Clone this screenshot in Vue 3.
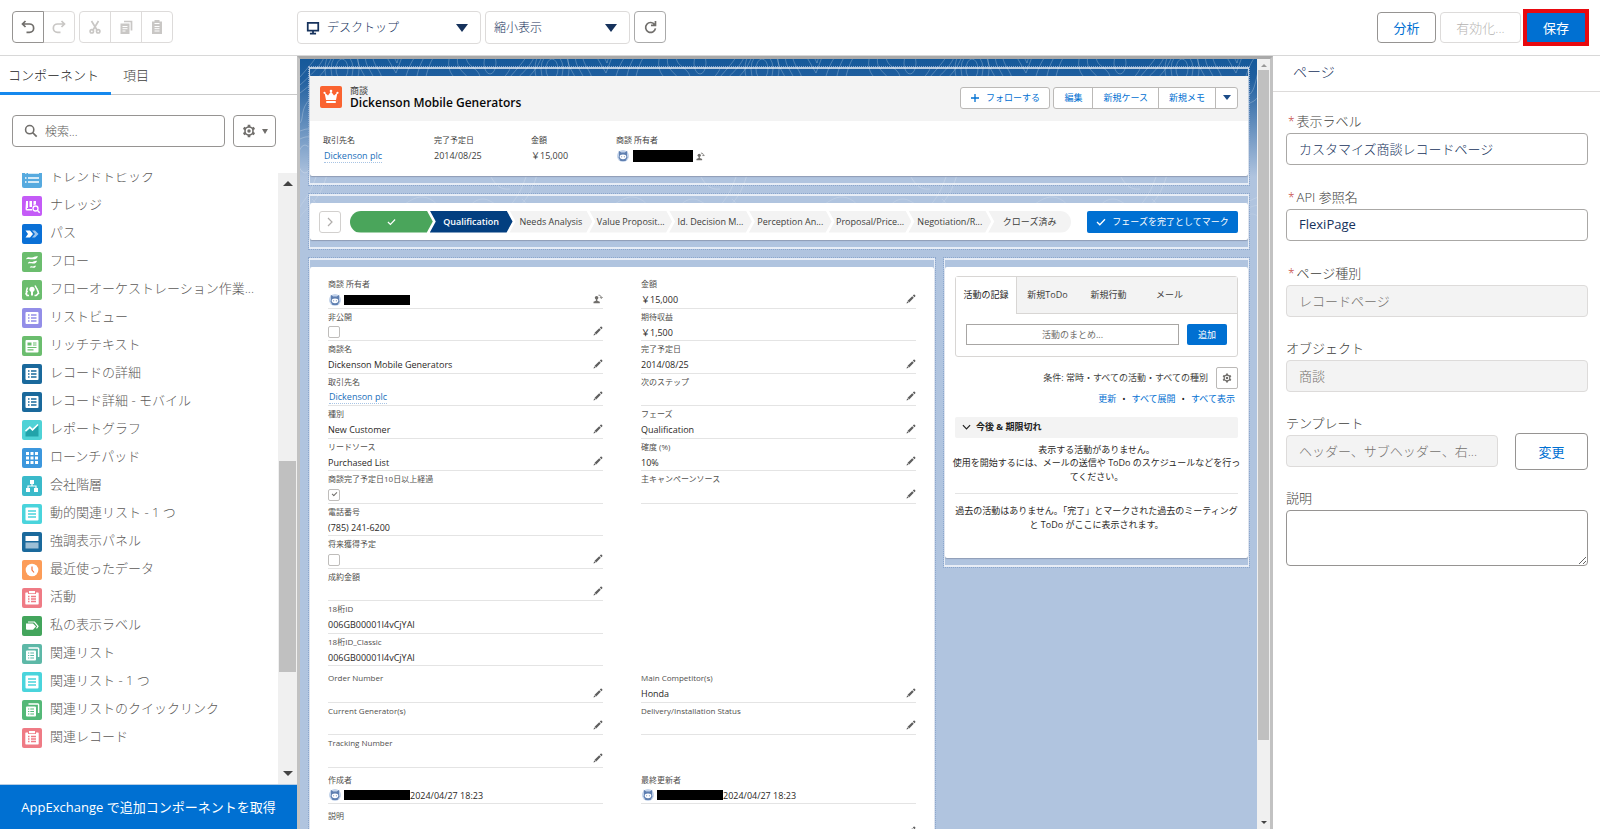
<script setup>
import { ref } from 'vue'

const device = ref('デスクトップ')
const zoom = ref('縮小表示')
const label = ref('カスタマイズ商談レコードページ')
const apiName = ref('FlexiPage')
const description = ref('')

const components = [
  { name: 'トレンドトピック', icon: 'topic', color: '#56aadf' },
  { name: 'ナレッジ', icon: 'knowledge', color: '#c45bf7' },
  { name: 'パス', icon: 'path', color: '#0a70d6' },
  { name: 'フロー', icon: 'flow', color: '#6bbd6e' },
  { name: 'フローオーケストレーション作業...', icon: 'orchestration', color: '#6bbd6e' },
  { name: 'リストビュー', icon: 'list', color: '#938ee8' },
  { name: 'リッチテキスト', icon: 'richtext', color: '#6bbd6e' },
  { name: 'レコードの詳細', icon: 'list', color: '#1a699c' },
  { name: 'レコード詳細 - モバイル', icon: 'list', color: '#1a699c' },
  { name: 'レポートグラフ', icon: 'chart', color: '#4fd2d6' },
  { name: 'ローンチパッド', icon: 'launch', color: '#3c97dd' },
  { name: '会社階層', icon: 'hierarchy', color: '#3bbaca' },
  { name: '動的関連リスト - 1 つ', icon: 'lines', color: '#4ad4dc' },
  { name: '強調表示パネル', icon: 'panel', color: '#1a699c' },
  { name: '最近使ったデータ', icon: 'clock', color: '#fc9c58' },
  { name: '活動', icon: 'clipboard', color: '#ef7b85' },
  { name: '私の表示ラベル', icon: 'tag', color: '#43a55c' },
  { name: '関連リスト', icon: 'stack', color: '#5db8a7' },
  { name: '関連リスト - 1 つ', icon: 'lines', color: '#4ad4dc' },
  { name: '関連リストのクイックリンク', icon: 'stack', color: '#54b877' },
  { name: '関連レコード', icon: 'clipboard', color: '#ef7b85' },
]

const stages = ['Needs Analysis', 'Value Proposit...', 'Id. Decision M...', 'Perception An...', 'Proposal/Price...', 'Negotiation/R...', 'クローズ済み']

const sections = [
  [
    [
      { label: '商談 所有者', type: 'owner', edit: 'owner' },
      { label: '非公開', type: 'check', checked: false, edit: 'pencil' },
      { label: '商談名', value: 'Dickenson Mobile Generators', edit: 'pencil' },
      { label: '取引先名', type: 'link', value: 'Dickenson plc', edit: 'pencil' },
      { label: '種別', value: 'New Customer', edit: 'pencil' },
      { label: 'リードソース', value: 'Purchased List', edit: 'pencil' },
      { label: '商談完了予定日10日以上経過', type: 'check', checked: true },
      { label: '電話番号', value: '(785) 241-6200' },
      { label: '将来獲得予定', type: 'check', checked: false, edit: 'pencil' },
      { label: '成約金額', edit: 'pencil' },
      { label: '18桁ID', value: '006GB00001I4vCjYAI' },
      { label: '18桁ID_Classic', value: '006GB00001I4vCjYAI' },
    ],
    [
      { label: '金額', value: '￥15,000', edit: 'pencil' },
      { label: '期待収益', value: '￥1,500' },
      { label: '完了予定日', value: '2014/08/25', edit: 'pencil' },
      { label: '次のステップ', edit: 'pencil' },
      { label: 'フェーズ', value: 'Qualification', edit: 'pencil' },
      { label: '確度 (%)', value: '10%', edit: 'pencil' },
      { label: '主キャンペーンソース', edit: 'pencil' },
    ],
  ],
  [
    [
      { label: 'Order Number', edit: 'pencil' },
      { label: 'Current Generator(s)', edit: 'pencil' },
      { label: 'Tracking Number', edit: 'pencil' },
    ],
    [
      { label: 'Main Competitor(s)', value: 'Honda', edit: 'pencil' },
      { label: 'Delivery/Installation Status', edit: 'pencil' },
    ],
  ],
  [
    [{ label: '作成者', type: 'owner', value: '2024/04/27 18:23' }],
    [{ label: '最終更新者', type: 'owner', value: '2024/04/27 18:23' }],
  ],
  [[{ label: '説明', edit: 'pencil' }]],
]
</script>

<template>
  <svg class="sprite" aria-hidden="true">
    <symbol id="i-topic" viewBox="0 0 20 20"><path d="M3 5h1.500M6 5h11M3 10h1.500M6 10h11M3 14h1.500M6 14h11" stroke="#fff" stroke-width="1.500" /></symbol>
    <symbol id="i-knowledge" viewBox="0 0 20 20"><path d="M4 5h2v7H5v1h5v1.500H5A1.500 1.500 0 0 1 3.500 13zM7.500 5H10v6H7.500zM11.500 5H14v3.500a4 4 0 0 0-2.500 1z" fill="#fff" /><circle cx="13.500" cy="12.500" r="2.500" fill="none" stroke="#fff" stroke-width="1.300" /><path d="m15.500 14.500 2.200 2.200" stroke="#fff" stroke-width="1.500" /></symbol>
    <symbol id="i-path" viewBox="0 0 20 20"><path d="M3.500 6.500H8L11 10l-3 3.500H3.500L6 10z" fill="#fff" /><path d="M10 6.500h3L16.500 10 13 13.500h-3L13 10z" fill="#9cc5ee" /></symbol>
    <symbol id="i-flow" viewBox="0 0 20 20"><path d="M4 7.200c1.500-3.400 4-1.300 6-1.700S13 3.800 16 4.300c-1.300 3-3.300 3.200-5.300 3S7 6.600 4 7.200zM5.800 11.500c1.300-2.900 3-1.100 4.700-1.500s2.200-1.400 4.500-1.100c-1 2.500-2.500 2.700-4.200 2.500s-2.800-.5-5 .1zM7.800 15.800c1-2.400 2-1 3.200-1.300s1.500-.9 3-.8c-.8 2-1.800 2.200-2.900 2s-1.800-.4-3.300.1z" fill="#fff" /></symbol>
    <symbol id="i-orchestration" viewBox="0 0 20 20"><circle cx="10" cy="9.300" r="2.600" fill="#fff" /><path d="M9 11h2v4.500H9z" fill="#fff" /><path d="M5.500 7.500c-1 2.500-1.800 5-.5 8h2M5.500 11l-2 3.500M13 5.500l3 5.500c.8 1.500.5 3-2 4.500h-1.500M15 9l1.800 5" fill="none" stroke="#fff" stroke-width="1.500" /></symbol>
    <symbol id="i-list" viewBox="0 0 20 20"><rect x="3.500" y="4" width="13" height="12" rx="1" fill="#fff" /><path d="M6 7h1.500M9 7h5.500M6 10h1.500M9 10h5.500M6 13h1.500M9 13h5.500" stroke="currentColor" stroke-width="1.400" /></symbol>
    <symbol id="i-richtext" viewBox="0 0 20 20"><rect x="3.500" y="4" width="13" height="12.500" rx="1" fill="#fff" /><path d="M5.500 6.500h4v3h-4z" fill="currentColor" /><path d="M11 7h3.500M11 9h3.500M5.500 11.500h9M5.500 13.800h6" stroke="currentColor" stroke-width="1.200" /></symbol>
    <symbol id="i-chart" viewBox="0 0 20 20"><path d="M3.500 12.500 8 8.500l2.500 2.500L16.500 5v11.500h-13z" fill="#22a3aa" /><path d="m3.500 11 4.300-3.800 2.700 2.600 5.500-5.300" fill="none" stroke="#fff" stroke-width="1.600" /></symbol>
    <symbol id="i-launch" viewBox="0 0 20 20"><path d="M4 4h3v3H4zM8.500 4h3v3h-3zM13 4h3v3h-3zM4 8.500h3v3H4zM8.500 8.500h3v3h-3zM13 8.500h3v3h-3zM4 13h3v3H4zM8.500 13h3v3h-3zM13 13h3v3h-3z" fill="#fff" /></symbol>
    <symbol id="i-hierarchy" viewBox="0 0 20 20"><path d="M8 4h4v4H8zM4 12h4v4H4zM12 12h4v4h-4z" fill="#fff" /><path d="M10 7v3M6 13v-3h8v3" fill="none" stroke="#fff" stroke-width="1.200" /></symbol>
    <symbol id="i-lines" viewBox="0 0 20 20"><rect x="3.500" y="3.500" width="13" height="13" rx="1" fill="#fff" /><path d="M6 7h8M6 10h8M6 13h8" stroke="currentColor" stroke-width="1.300" /></symbol>
    <symbol id="i-panel" viewBox="0 0 20 20"><rect x="3.500" y="4" width="13" height="5" fill="#fff" /><rect x="3.500" y="10.500" width="13" height="6" fill="#9dbfd6" /></symbol>
    <symbol id="i-clock" viewBox="0 0 20 20"><circle cx="10" cy="10" r="6.300" fill="#fff" /><path d="M10 6.500V10l2 2.500" fill="none" stroke="#f1703f" stroke-width="1.200" /></symbol>
    <symbol id="i-clipboard" viewBox="0 0 20 20"><path d="M4 4.500h2V6h8V4.500h2a.7.7 0 0 1 .7.700v10.600a.7.7 0 0 1-.7.700H4a.7.7 0 0 1-.7-.7V5.200a.7.7 0 0 1 .7-.7z" fill="#fff" /><path d="M7 3h6v2.300H7z" fill="#fff" /><path d="M6 8.500h1.500M9 8.500h5M6 11h1.500M9 11h5M6 13.500h1.500M9 13.500h5" stroke="currentColor" stroke-width="1.300" /></symbol>
    <symbol id="i-tag" viewBox="0 0 20 20"><path d="M4 7.500h7l3 3-3 3.300H5A1 1 0 0 1 4 13z" fill="#fff" /><path d="M6 6h6.500l3.500 4.300-1.500 2" fill="none" stroke="#fff" stroke-width="1.200" /></symbol>
    <symbol id="i-stack" viewBox="0 0 20 20"><path d="M6.500 4h9.300a.8.8 0 0 1 .8.800V13" fill="none" stroke="#fff" stroke-width="1.400" /><rect x="4" y="6.500" width="10" height="10" rx="1" fill="#fff" /><path d="M6 9h1.300M8.300 9H12M6 11.500h1.300M8.300 11.500H12M6 14h1.300M8.300 14H12" stroke="currentColor" stroke-width="1.200" /></symbol>
    <symbol id="i-pencil" viewBox="0 0 10 10"><path d="M7.600.800a.8.8 0 0 1 1.100 0l.5.500a.8.8 0 0 1 0 1.100l-.8.800-1.600-1.600zM6.200 2.200l1.600 1.600-4.600 4.600-1.600-1.600zM1.200 7.300l1.500 1.500-2.200.700z" fill="#5f5f5f" /></symbol>
    <symbol id="i-owner" viewBox="0 0 10 10"><circle cx="3.600" cy="3.700" r="1.800" fill="#706e6b" /><path d="M2.900 5h1.400v1.800l2.500.9v1.600H.500V7.700l2.400-.9z" fill="#706e6b" /><path d="M5.500 1.200c2 0 2.800 1 2.800 2.800M7 3.200l1.300 1.300 1.300-1.300" fill="none" stroke="#706e6b" stroke-width=".9" /></symbol>
    <symbol id="i-gear" viewBox="0 0 16 16"><path d="M8 .800v14.400M1.800 4.400l12.400 7.200M1.800 11.600l12.400-7.200" stroke="#706e6b" stroke-width="3" /><circle cx="8" cy="8" r="4.600" fill="#fff" stroke="#706e6b" stroke-width="1.800" /><circle cx="8" cy="8" r="2" fill="#706e6b" /></symbol>
    <symbol id="i-avatar" viewBox="0 0 12 12"><circle cx="6" cy="6" r="6" fill="#c3d3ea" /><path d="M1.800.800 4.200 2.600h3.600L10.200.800 10 6l.5 1.500L8.500 11h-5l-2-3.500L2 6z" fill="#5f7fb0" /><ellipse cx="6" cy="6.800" rx="3.300" ry="2.400" fill="#fff" /><circle cx="4.700" cy="6.700" r=".5" fill="#4c6c9f" /><circle cx="7.300" cy="6.700" r=".5" fill="#4c6c9f" /></symbol>
  </svg>

  <div class="app">
    <header class="toolbar">
      <div class="tools">
        <div class="group">
          <button class="tool on" aria-label="元に戻す"><svg viewBox="0 0 16 16"><path d="M5.500 2 2.500 5l3 3M3 5h6.500a4 4 0 0 1 0 8.300H6.500" /></svg></button>
          <button class="tool" aria-label="やり直す"><svg viewBox="0 0 16 16"><path d="m10.500 2 3 3-3 3M13 5H6.500a4 4 0 0 0 0 8.300h3" /></svg></button>
        </div>
        <div class="group">
          <button class="tool" aria-label="切り取り"><svg viewBox="0 0 16 16"><path d="m4.500 2 5.500 9M11.500 2 6 11" /><circle cx="4.800" cy="12.300" r="1.700" /><circle cx="11.200" cy="12.300" r="1.700" /></svg></button>
          <button class="tool" aria-label="コピー"><svg viewBox="0 0 16 16"><path d="M6 2.500h7.500v9" /><path class="solid" d="M2.500 4.500h9V15h-9z" /><path class="knock" d="M4.500 7.500h5M4.500 9.700h5M4.500 12h3" /></svg></button>
          <button class="tool" aria-label="貼り付け"><svg viewBox="0 0 16 16"><path class="solid" d="M3 2.500h2.500V1h5v1.500H13V15H3z" /><path class="knock" d="M5.500 4.500h5M5.500 7.500h5M5.500 9.700h5M5.500 12h5" /></svg></button>
        </div>
      </div>
      <div class="view">
        <label class="pick device">
          <svg class="screen" viewBox="0 0 16 16"><path d="M2 2h12v9H2zM8 11v3M4.500 14.500h7" fill="none" stroke="#16325c" stroke-width="2" /></svg>
          <select v-model="device" aria-label="デバイス"><option>デスクトップ</option></select>
          <span class="caret"></span>
        </label>
        <label class="pick scale">
          <select v-model="zoom" aria-label="表示倍率"><option>縮小表示</option></select>
          <span class="caret"></span>
        </label>
        <button class="refresh" aria-label="更新"><svg viewBox="0 0 16 16"><path d="M12.500 5A5.300 5.300 0 1 0 13.300 9M13.300 1v4.800H8.500" fill="none" stroke="#706e6b" stroke-width="1.800" /></svg></button>
      </div>
      <div class="actions">
        <button class="btn analyze">分析</button>
        <button class="btn activate" disabled>有効化...</button>
        <div class="mark"><button class="save">保存</button></div>
      </div>
    </header>

    <div class="body">
      <aside class="left">
        <nav class="tabs">
          <button class="tab active">コンポーネント</button>
          <button class="tab">項目</button>
        </nav>
        <div class="search-row">
          <label class="search">
            <svg viewBox="0 0 16 16"><circle cx="6.500" cy="6.500" r="4.700" fill="none" stroke="#706e6b" stroke-width="1.800" /><path d="m10 10 4.500 4.500" stroke="#706e6b" stroke-width="2" /></svg>
            <input type="text" placeholder="検索..." aria-label="検索" />
          </label>
          <button class="settings" aria-label="設定"><svg><use href="#i-gear" /></svg><span></span></button>
        </div>
        <div class="list-wrap">
          <ul class="list">
            <li v-for="(c, i) in components" :key="i">
              <svg class="tile" :style="{ background: c.color, color: c.color }"><use :href="'#i-' + c.icon" /></svg>
              <span>{{ c.name }}</span>
            </li>
          </ul>
          <div class="bar">
            <i class="up"></i>
            <div class="thumb"></div>
            <i class="down"></i>
          </div>
        </div>
        <a class="exchange" href="#">AppExchange で追加コンポーネントを取得</a>
      </aside>

      <main class="canvas">
        <div class="page">
          <svg class="topo" aria-hidden="true">
            <defs>
              <pattern id="contours" width="210" height="190" patternUnits="userSpaceOnUse">
                <g fill="none" stroke="#fff" stroke-opacity=".24">
                  <path d="M0 18C12 4 16 0 20-10M0 26C18 10 24 2 27-10M0 34C24 16 30 6 34-10M60-10C52 10 70 14 66 30S90 52 110 44 120 10 140-10M67-10C60 8 78 14 74 28S92 44 106 38 112 8 131-10M74-10C68 4 84 12 82 24S96 36 101 30 106 4 122-10M160-10C150 16 172 10 170 30S196 40 210 20M152-10C140 20 164 18 162 34S194 50 210 30M168-10C160 10 182 6 180 22S200 28 210 10M82-10 96 14 105-10M90-10 97 4 101-10" />
                  <ellipse cx="42" cy="10" rx="11" ry="16" /><ellipse cx="42" cy="10" rx="6" ry="10" /><ellipse cx="42" cy="10" rx="17" ry="23" />
                  <ellipse cx="190" cy="4" rx="6" ry="11" />
                  <path d="M0 80C20 70 24 96 16 118S4 140 0 148M0 72C28 60 34 98 25 122S8 146 0 158M40 190C44 160 60 140 80 150S110 130 130 140 136 176 128 190M48 190C52 168 64 150 80 158S108 140 124 148 128 176 120 190M56 190C60 174 70 160 82 166S104 150 116 156 120 178 112 190M150 190C160 150 176 134 190 142S206 150 210 148M160 190C168 160 180 146 190 152S204 160 210 158M210 72C190 70 182 100 190 116S206 130 210 130M10 40C0 50 4 60 0 64M16 190C20 170 24 150 12 140M140 110C170 90 190 118 210 114" />
                  <ellipse cx="5" cy="100" rx="7" ry="14" /><ellipse cx="86" cy="178" rx="12" ry="8" /><ellipse cx="186" cy="174" rx="9" ry="14" />
                </g>
              </pattern>
            </defs>
            <rect width="100%" height="100%" fill="url(#contours)" />
          </svg>

          <section class="slot">
            <div class="card highlights">
              <div class="head">
                <svg class="crown" viewBox="0 0 22 22"><path d="M4.500 6.500 8 9.500l3-4 3 4 3.500-3L16 14H6z" fill="#fff" /><circle cx="4.500" cy="6.800" r="1.100" fill="#fff" /><circle cx="11" cy="5" r="1.300" fill="#fff" /><circle cx="17.500" cy="6.800" r="1.100" fill="#fff" /><rect x="6" y="15" width="10" height="2" rx="1" fill="#fff" /></svg>
                <div class="title">
                  <span>商談</span>
                  <h1>Dickenson Mobile Generators</h1>
                </div>
                <button class="sbtn follow"><svg viewBox="0 0 8 8"><path d="M4 0v8M0 4h8" stroke="#0070d2" stroke-width="1.300" /></svg>フォローする</button>
                <div class="sgroup">
                  <button>編集</button><button>新規ケース</button><button>新規メモ</button><button class="more" aria-label="その他"><span class="caret small"></span></button>
                </div>
              </div>
              <dl class="facts">
                <div class="f1"><dt>取引先名</dt><dd><a href="#" class="dotted">Dickenson plc</a></dd></div>
                <div class="f2"><dt>完了予定日</dt><dd>2014/08/25</dd></div>
                <div class="f3"><dt>金額</dt><dd>￥15,000</dd></div>
                <div><dt>商談 所有者</dt><dd class="who"><svg class="avatar"><use href="#i-avatar" /></svg><b class="redact wide"></b><svg class="mini"><use href="#i-owner" /></svg></dd></div>
              </dl>
            </div>
          </section>

          <section class="slot">
            <div class="card pathcard">
              <button class="toggle" aria-label="詳細を表示"><svg viewBox="0 0 10 10"><path d="m3 1 4 4-4 4" fill="none" stroke="#b0adab" stroke-width="1.200" /></svg></button>
              <ol class="path">
                <li class="done"><svg viewBox="0 0 10 8"><path d="m1 4 2.800 2.800L9 1.200" fill="none" stroke="#fff" stroke-width="1.300" /></svg></li>
                <li class="current">Qualification</li>
                <li v-for="s in stages" :key="s">{{ s }}</li>
              </ol>
              <button class="complete"><svg viewBox="0 0 10 8"><path d="m1 4 2.800 2.800L9 1.200" fill="none" stroke="#fff" stroke-width="1.300" /></svg>フェーズを完了としてマーク</button>
            </div>
          </section>

          <div class="columns">
            <section class="slot main-slot">
              <div class="card detail">
                <div v-for="(s, si) in sections" :key="si" class="section" :class="{ single: s.length === 1 }">
                  <div v-for="(col, ci) in s" :key="ci">
                    <div v-for="f in col" :key="f.label" class="field">
                      <div class="flabel">{{ f.label }}</div>
                      <div class="fvalue">
                        <template v-if="f.type === 'owner'"><svg class="avatar"><use href="#i-avatar" /></svg><b class="redact"></b>{{ f.value }}</template>
                        <input v-else-if="f.type === 'check'" type="checkbox" disabled :checked="f.checked" :aria-label="f.label" />
                        <a v-else-if="f.type === 'link'" href="#" class="dotted">{{ f.value }}</a>
                        <template v-else>{{ f.value }}</template>
                      </div>
                      <button v-if="f.edit" class="edit" :aria-label="f.label + 'を編集'"><svg><use :href="'#i-' + f.edit" /></svg></button>
                    </div>
                  </div>
                </div>
              </div>
            </section>

            <section class="slot side-slot">
              <div class="card activity">
                <div class="composer">
                  <div class="ctabs">
                    <button class="sel">活動の記録</button><button>新規ToDo</button><button>新規行動</button><button>メール</button>
                  </div>
                  <div class="compose">
                    <input type="text" placeholder="活動のまとめ..." aria-label="活動のまとめ" />
                    <button>追加</button>
                  </div>
                </div>
                <div class="filter"><span>条件: 常時・すべての活動・すべての種別</span><button aria-label="条件の設定"><svg><use href="#i-gear" /></svg></button></div>
                <div class="links"><a href="#">更新</a><i>•</i><a href="#">すべて展開</a><i>•</i><a href="#">すべて表示</a></div>
                <h2><svg viewBox="0 0 10 8"><path d="m1 2 4 4 4-4" fill="none" stroke="#222" stroke-width="1.300" /></svg>今後 &amp; 期限切れ</h2>
                <p class="none">表示する活動がありません。<br />使用を開始するには、メールの送信や ToDo のスケジュールなどを行っ<br />てください。</p>
                <hr />
                <p class="past">過去の活動はありません。「完了」とマークされた過去のミーティング<br />と ToDo がここに表示されます。</p>
              </div>
            </section>
          </div>
        </div>
        <div class="bar canvas-bar">
          <i class="up"></i>
          <div class="thumb"></div>
          <i class="down"></i>
        </div>
      </main>

      <aside class="right">
        <h2 class="ptitle">ページ</h2>
        <form class="props" @submit.prevent>
          <div class="prop"><label for="p-label"><em>*</em>表示ラベル</label><input id="p-label" v-model="label" type="text" /></div>
          <div class="prop"><label for="p-api"><em>*</em>API 参照名</label><input id="p-api" v-model="apiName" class="latin" type="text" /></div>
          <div class="prop"><label for="p-type"><em>*</em>ページ種別</label><input id="p-type" type="text" value="レコードページ" disabled /></div>
          <div class="prop"><label for="p-obj">オブジェクト</label><input id="p-obj" type="text" value="商談" disabled /></div>
          <div class="prop"><label for="p-tpl">テンプレート</label>
            <div class="tpl"><input id="p-tpl" type="text" value="ヘッダー、サブヘッダー、右..." disabled /><button type="button">変更</button></div>
          </div>
          <div class="prop"><label for="p-desc">説明</label><textarea id="p-desc" v-model="description"></textarea></div>
        </form>
      </aside>
    </div>
  </div>
</template>

<style>
html, body { margin: 0; overflow: hidden; }
</style>

<style scoped>
.sprite { position: absolute; width: 0; height: 0; }
.app, .app button, .app input, .app select, .app textarea { font-family: "Open Sans", "Noto Sans CJK JP", sans-serif; }
.app { height: 100vh; display: flex; flex-direction: column; background: #fff; color: #3e3e3c; font-size: 13px; font-weight: 300; }
.app *, .app *::before, .app *::after { box-sizing: border-box; }
button { margin: 0; padding: 0; border: 0; background: none; color: inherit; font-size: inherit; font-weight: inherit; cursor: pointer; }
a { text-decoration: none; color: #0070d2; }
svg { flex: none; }

/* toolbar */
.toolbar { flex: none; height: 56px; display: flex; align-items: flex-start; border-bottom: 1px solid #d8d8d8; }
.tools { width: 297px; display: flex; gap: 4px; padding: 11px 0 0 12px; }
.group { display: flex; height: 32px; }
.tool { width: 32px; border: 1px solid #dddbda; margin-left: -1px; display: grid; place-items: center; color: #c9c7c5; }
.tool:first-child { margin-left: 0; border-radius: 4px 0 0 4px; }
.tool:last-child { border-radius: 0 4px 4px 0; }
.tool.on { color: #706e6b; border-color: #969492; z-index: 1; }
.tool svg { width: 16px; height: 16px; fill: none; stroke: currentColor; stroke-width: 1.7; }
.tool .solid { fill: currentColor; stroke: none; }
.tool .knock { stroke: #fff; stroke-width: 1; }
.view { display: flex; gap: 4px; padding-top: 11px; }
.pick { position: relative; display: flex; align-items: center; height: 33px; border: 1px solid #dddbda; border-radius: 4px; padding: 0 12px 0 8px; color: #16325c; }
.device { width: 184px; }
.scale { width: 145px; }
.pick select { flex: 1; min-width: 0; appearance: none; border: 0; background: none; color: inherit; font-size: 12px; font-weight: inherit; padding: 0; outline: 0; }
.screen { width: 14px; height: 14px; margin-right: 7px; }
.caret { border: 6px solid transparent; border-top: 8px solid #16325c; border-bottom: 0; }
.caret.small { border-width: 5px 4px 0; border-top-color: #1b4b87; }
.refresh { width: 32px; height: 32px; border: 1px solid #aaa; border-radius: 4px; display: grid; place-items: center; }
.refresh svg { width: 15px; height: 15px; }
.actions { margin-left: auto; display: flex; gap: 4px; padding: 12px 11px 0 0; }
.btn { height: 31px; border: 1px solid #969492; border-radius: 4px; color: #0070d2; }
.analyze { width: 59px; font-weight: 400; }
.activate { width: 81px; margin-right: -2px; border-color: #dddbda; color: #b5b3b1; }
.mark { margin-top: -3px; height: 37px; border: 4px solid #e8090f; background: #e8090f; }
.save { width: 58px; height: 29px; background: #0070d2; color: #fff; border-radius: 1px; display: block; font-weight: 400; }

/* layout */
.body { flex: 1; min-height: 0; display: flex; }
.left { width: 297px; flex: none; display: flex; flex-direction: column; }
.canvas { flex: 1; min-width: 0; display: flex; border: 3px solid #c2c2c2; border-bottom: 0; border-top-color: #a9a9a9; overflow: hidden; }
.right { width: 327px; flex: none; }

/* left panel */
.tabs { display: flex; height: 39px; border-bottom: 1px solid #c9c9c9; }
.tab { padding: 0 12px; height: 39px; border-bottom: 3px solid transparent; }
.tab.active { width: 111px; padding: 0 0 0 8px; text-align: left; color: #222; border-bottom-color: #1589ee; }
.search-row { display: flex; gap: 8px; padding: 20px 12px 0; height: 78px; }
.search { width: 213px; height: 32px; display: flex; align-items: center; gap: 7px; padding: 0 11px; border: 1px solid #969492; border-radius: 4px; }
.search svg { width: 14px; height: 14px; }
.search input { flex: 1; min-width: 0; border: 0; padding: 0; outline: 0; font-size: 12px; font-weight: inherit; }
.search input::placeholder { color: #5c5a58; }
.settings { width: 43px; height: 32px; border: 1px solid #969492; border-radius: 4px; display: flex; align-items: center; justify-content: center; gap: 6px; }
.settings svg { width: 14px; height: 14px; }
.settings span { border: 3px solid transparent; border-top: 5px solid #706e6b; border-bottom: 0; }
.list-wrap { flex: 1; min-height: 0; display: flex; }
.list { flex: 1; min-width: 0; overflow: hidden; list-style: none; margin: 0; padding: 0 0 0 22px; display: flex; flex-direction: column; }
.list li { flex: none; height: 28px; display: flex; align-items: center; gap: 8px; color: #5c5a58; white-space: nowrap; }
.list li:first-child { margin-top: -9px; }
.list span { padding-bottom: 5px; }
.tile { width: 20px; height: 20px; border-radius: 2px; }
.bar { width: 19px; background: #f0f0f0; display: flex; flex-direction: column; align-items: center; padding: 8px 1px; }
.bar i { border: 5px solid transparent; }
.bar .up { border-top: 0; border-bottom-color: #444; }
.bar .down { border-bottom: 0; border-top-color: #444; }
.list-wrap .thumb { width: 17px; height: 211px; margin: 275px 0 auto; background: #c0c0c0; }
.exchange { flex: none; height: 45px; background: #0070d2; color: #fff; display: grid; place-items: center; border-top: 1px solid #b7cde4; padding-bottom: 1px; font-weight: 400; }

/* preview */
.page { position: relative; flex: 1; min-width: 0; overflow: hidden; padding: 8px 8px 0 9px; background: linear-gradient(#15599a 0, #205f9f 20px, #b0c4df 118px); display: flex; flex-direction: column; gap: 9px; font-size: 9px; line-height: 1.5; font-weight: 400; }
.topo { position: absolute; left: 0; top: 0; width: 100%; height: 190px; -webkit-mask-image: linear-gradient(#000 60%, transparent); mask-image: linear-gradient(#000 60%, transparent); }
.slot { position: relative; flex: none; border: solid rgba(255, 255, 255, .7); border-width: 2px 1px; outline: 1px dotted #8ba6cc; outline-offset: 0; padding: 7px 0; min-width: 0; }
.card { background: #fff; border-radius: 2px; box-shadow: 0 1px 1px #8f9db5; }
.canvas-bar { width: 13px; padding: 5px 0; }
.canvas-bar i { border-width: 3px; }
.canvas-bar .up { border-bottom-color: #999; margin-bottom: 3px; }
.canvas-bar .thumb { width: 11px; flex: 1; max-height: 670px; margin-bottom: auto; background: #c0c0c0; }

.head { height: 45px; display: flex; align-items: center; background: #f3f3f3; padding: 0 10px; }
.crown { width: 22px; height: 22px; background: #fa6330; border-radius: 2px; margin-right: 8px; margin-bottom: 4px; }
.title { flex: 1; min-width: 0; padding-bottom: 4px; }
.title span { display: block; font-size: 9px; line-height: 11px; }
.title h1 { margin: 0; font-size: 12px; line-height: 13px; font-weight: 600; color: #080707; }
.sbtn, .sgroup { height: 22px; border: 1px solid #bbb9b7; border-radius: 3px; background: #fff; color: #0070d2; margin-bottom: 2px; }
.follow { width: 90px; margin-right: 3px; display: flex; align-items: center; justify-content: center; gap: 7px; }
.follow svg { width: 8px; height: 8px; }
.sgroup { display: flex; }
.sgroup button { padding: 0 10px; border-left: 1px solid #bbb9b7; }
.sgroup button:first-child { border: 0; }
.sgroup .more { width: 22px; padding: 0; display: grid; place-items: center; }
.facts { display: flex; margin: 0; padding: 13px 13px 0; height: 55px; color: #3e3e3c; }
.facts dt { font-size: 8px; line-height: 12px; margin-bottom: 2px; white-space: nowrap; }
.facts dd { margin: 0; line-height: 16px; height: 16px; white-space: nowrap; display: flex; align-items: center; }
.f1 { width: 111px; }
.f2 { width: 97px; }
.f3 { width: 85px; }
.dotted { margin-left: 1px; color: #2270bb; border-bottom: 1px dotted #a8c4e4; line-height: 13px; }
.avatar { width: 12px; height: 12px; margin: 0 3px 0 1px; }
.redact { width: 66px; height: 10px; background: #000; }
.redact.wide { width: 60px; height: 12px; margin: 0 3px 0 1px; }
.mini { width: 9px; height: 9px; }

.pathcard { display: flex; align-items: center; height: 37px; padding: 0 10px 0 9px; }
.toggle { width: 22px; height: 22px; border: 1px solid #d2d0ce; border-radius: 3px; display: grid; place-items: center; margin-right: 9px; }
.toggle svg { width: 10px; height: 10px; }
.path { flex: 1; min-width: 0; display: flex; list-style: none; margin: 0 16px 0 0; padding: 0; border-radius: 11px; overflow: hidden; }
.path li { flex: 1 1 0; min-width: 0; height: 22px; background: #f3f3f3; clip-path: polygon(0 0, calc(100% - 6px) 0, 100% 50%, calc(100% - 6px) 100%, 0 100%, 6px 50%); margin-left: -3px; display: flex; align-items: center; justify-content: center; white-space: nowrap; }
.path .done { background: #4aa55b; clip-path: polygon(0 0, calc(100% - 6px) 0, 100% 50%, calc(100% - 6px) 100%, 0 100%); margin-left: 0; }
.path .done svg { width: 9px; height: 8px; }
.path .current { background: #033f80; color: #fff; font-weight: 600; }
.path li:last-child { clip-path: polygon(0 0, 100% 0, 100% 100%, 0 100%, 6px 50%); }
.complete { width: 151px; height: 22px; background: #0070d2; color: #fff; border-radius: 2px; display: flex; align-items: center; justify-content: center; gap: 6px; white-space: nowrap; }
.complete svg { width: 10px; height: 8px; }

.columns { display: flex; gap: 9px; align-items: flex-start; }
.main-slot { flex: 1; }
.side-slot { width: 305px; }
.detail { padding: 9px 18px 40px; }
.section { display: grid; grid-template-columns: 1fr 1fr; gap: 38px; margin-bottom: 4px; }
.section.single { grid-template-columns: 1fr; }
.field { position: relative; padding: 2px 0 1px; border-bottom: 1px solid #e4e4e4; }
.flabel { font-size: 8px; line-height: 1.5; margin-bottom: 3px; color: #514f4d; }
.fvalue { height: 1.5em; display: flex; align-items: center; color: #2b2826; white-space: nowrap; }
.fvalue input { appearance: none; width: 12px; height: 12px; margin: 0; border: 1px solid #bfbdbb; border-radius: 2px; background: #fff; display: grid; place-items: center; }
.fvalue input:checked::before { content: ""; width: 3px; height: 5px; border: solid #706e6b; border-width: 0 1px 1px 0; transform: rotate(45deg); margin-top: -2px; }
.edit { position: absolute; right: 0; bottom: 4px; width: 10px; height: 10px; display: block; }
.edit svg { width: 10px; height: 10px; display: block; }

.activity { padding: 9px 10px 27px; }
.composer { border: 1px solid #d8d6d4; border-radius: 3px; }
.ctabs { display: flex; background: #f3f3f3; border-bottom: 1px solid #d8d6d4; height: 37px; }
.ctabs button { width: 61px; padding-bottom: 2px; white-space: nowrap; font-size: 9px; }
.ctabs .sel { background: #fff; height: 37px; border-right: 1px solid #d8d6d4; color: #222; }
.compose { display: flex; gap: 8px; padding: 10px 10px 11px; }
.compose input { flex: 1; min-width: 0; height: 21px; border: 1px solid #a8a6a4; padding: 0; text-align: center; font-size: 9px; }
.compose input::placeholder { color: #706e6b; }
.compose button { width: 40px; height: 21px; border-radius: 2px; background: #0070d2; color: #fff; }
.filter { display: flex; justify-content: flex-end; align-items: center; gap: 8px; margin-top: 10px; }
.filter button { width: 22px; height: 22px; border: 1px solid #bbb9b7; border-radius: 2px; display: grid; place-items: center; }
.filter svg { width: 10px; height: 10px; }
.links { display: flex; justify-content: flex-end; gap: 6px; padding: 3px 3px 0 0; }
.links i { font-style: normal; color: #222; }
.activity h2 { margin: 11px 0 0; height: 21px; background: #f3f3f3; border-radius: 2px; display: flex; align-items: center; gap: 5px; padding-left: 7px; font-size: 9px; font-weight: 700; color: #222; }
.activity h2 svg { width: 9px; height: 8px; }
.activity p { margin: 5px -8px 0; text-align: center; white-space: nowrap; color: #2b2826; }
.activity hr { border: 0; border-top: 1px solid #e4e4e4; margin: 10px 0 0; }
.activity .past { margin-top: 10px; }

/* properties */
.ptitle { margin: 0; height: 36px; padding: 0 20px; border-bottom: 1px solid #dddbda; font-size: 14px; line-height: 31px; font-weight: 300; color: #16325c; }
.props { padding: 20px 12px 0 13px; }
.prop { height: 76px; }
.prop:nth-child(n + 3) { height: 75px; }
.prop > label { display: block; height: 21px; line-height: 18px; }
.prop em { color: #c23934; font-style: normal; margin: 0 2px; font-size: 12px; }
.prop input { width: 100%; height: 32px; border: 1px solid #aaa8a6; border-radius: 4px; padding: 0 12px 2px; font-size: 13px; font-weight: inherit; color: #16325c; display: block; text-overflow: ellipsis; }
.prop .latin { font-weight: 400; }
.prop input:disabled { background: #f3f3f3; border-color: #dddbda; color: #75726f; }
.tpl { display: flex; gap: 17px; align-items: center; }
.tpl input { flex: 1; min-width: 0; }
.tpl button { width: 73px; height: 37px; border: 1px solid #969492; border-radius: 4px; color: #0070d2; margin: -3px 0; font-weight: 400; }
.prop textarea { width: 100%; height: 56px; border: 1px solid #969492; border-radius: 4px; display: block; resize: vertical; }
</style>
